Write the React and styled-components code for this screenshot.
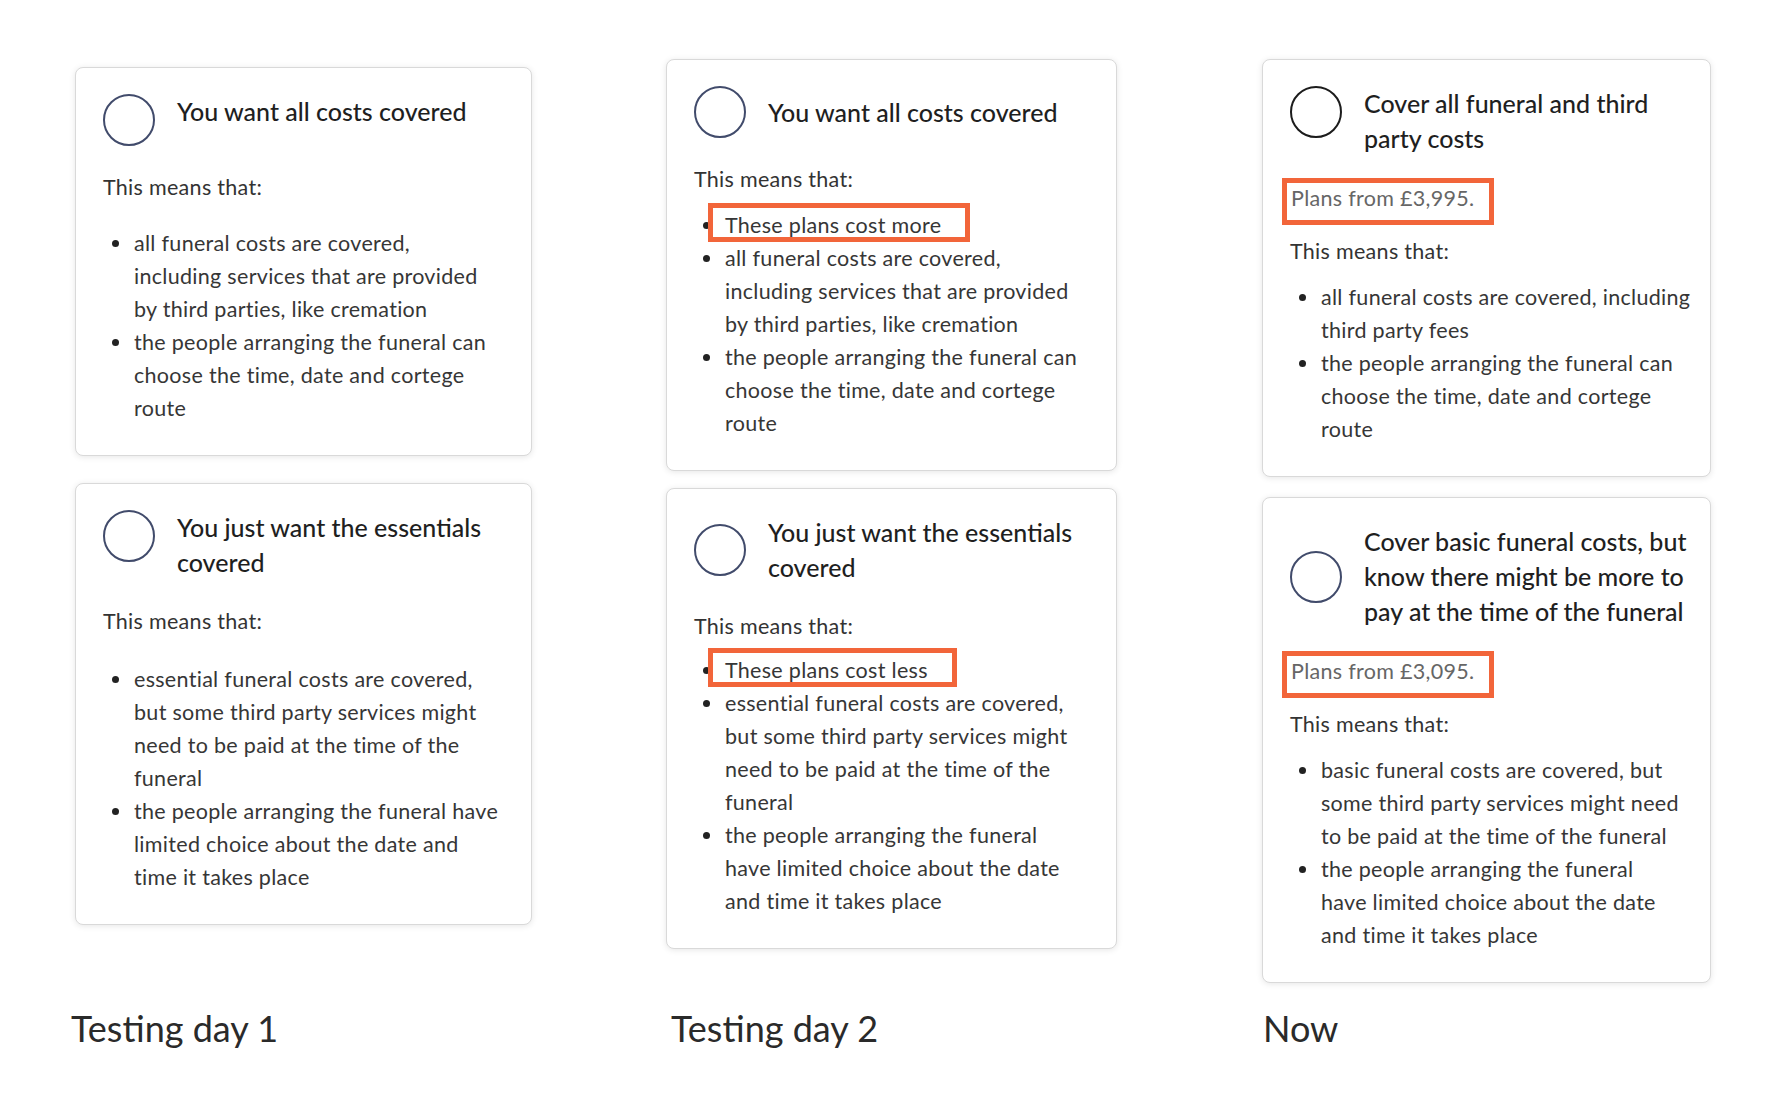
import React from "react";
import styled, { createGlobalStyle } from "styled-components";

const GlobalStyle = createGlobalStyle`
  html, body {
    margin: 0;
    padding: 0;
    background: #ffffff;
  }
  body {
    font-family: Lato, "Open Sans", "Liberation Sans", sans-serif;
    color: #3a3a3a;
  }
`;

const Board = styled.div`
  display: grid;
  grid-template-columns: 591px 596px 449px;
  grid-template-rows: auto auto;
  row-gap: 24px;
  padding: 59px 0 0 75px;
`;

const Column = styled.div`
  display: flex;
  flex-direction: column;
  align-items: flex-start;
  gap: ${(p) => p.$gap}px;
  padding-top: ${(p) => p.$top || 0}px;
`;

const Card = styled.div`
  box-sizing: border-box;
  width: ${(p) => p.$width}px;
  background: #ffffff;
  border: 1px solid #d9d9d9;
  border-radius: 8px;
  box-shadow: 0 1px 6px rgba(0, 0, 0, 0.1);
  padding: 26px 20px 30px 27px;
`;

const Header = styled.div`
  display: flex;
  align-items: ${(p) => (p.$align === "center" ? "center" : "flex-start")};
  gap: 22px;
  margin-bottom: 22px;
`;

const Radio = styled.span`
  flex: none;
  box-sizing: border-box;
  width: 52px;
  height: 52px;
  border-radius: 50%;
  border: 2.5px solid ${(p) => (p.$dark ? "#1c1c1c" : "#414b6b")};
`;

const Title = styled.div`
  font-size: 25px;
  line-height: 35px;
  font-weight: 500;
  color: #1f1f1f;
  white-space: pre;
`;

const Price = styled.div`
  display: inline-block;
  margin-left: -8px;
  padding: 0 15px 7px 4px;
  border: 5px solid #f2653a;
  font-size: 21.5px;
  letter-spacing: 0.3px;
  line-height: 30px;
  color: #666666;
`;

const Means = styled.p`
  margin: ${(p) => (p.$afterPrice ? 10 : 25)}px 0 0;
  font-size: 21.5px;
  letter-spacing: 0.3px;
  line-height: 33px;
  color: #333333;
`;

const Bullets = styled.ul`
  margin: ${(p) => p.$gap}px 0 0;
  padding: 0 0 0 30px;
  list-style: disc;
`;

const Item = styled.li`
  padding-left: 1px;
  font-size: 21.5px;
  letter-spacing: 0.3px;
  line-height: 33px;
  color: #363636;
  white-space: pre;

  &::marker {
    color: #222222;
  }
`;

const Marked = styled.span`
  position: relative;

  &::before {
    content: "";
    position: absolute;
    top: -9px;
    bottom: -4px;
    left: -17px;
    right: -29px;
    border: 5px solid #f2653a;
  }
`;

const Label = styled.div`
  margin-left: ${(p) => p.$nudge}px;
  font-size: 36px;
  line-height: 43px;
  font-weight: 400;
  color: #2a2a2a;
`;

const columns = [
  {
    top: 8,
    gap: 27,
    label: "Testing day 1",
    nudge: -4,
    cards: [
      {
        width: 457,
        align: "start",
        title: "You want all costs covered",
        listGap: 23,
        items: [
          "all funeral costs are covered,\nincluding services that are provided\nby third parties, like cremation",
          "the people arranging the funeral can\nchoose the time, date and cortege\nroute",
        ],
      },
      {
        width: 457,
        align: "start",
        title: "You just want the essentials\ncovered",
        listGap: 25,
        items: [
          "essential funeral costs are covered,\nbut some third party services might\nneed to be paid at the time of the\nfuneral",
          "the people arranging the funeral have\nlimited choice about the date and\ntime it takes place",
        ],
      },
    ],
  },
  {
    top: 0,
    gap: 17,
    label: "Testing day 2",
    nudge: 5,
    cards: [
      {
        width: 451,
        align: "center",
        title: "You want all costs covered",
        listGap: 13,
        marked: "These plans cost more",
        items: [
          "all funeral costs are covered,\nincluding services that are provided\nby third parties, like cremation",
          "the people arranging the funeral can\nchoose the time, date and cortege\nroute",
        ],
      },
      {
        width: 451,
        align: "center",
        title: "You just want the essentials\ncovered",
        listGap: 11,
        marked: "These plans cost less",
        items: [
          "essential funeral costs are covered,\nbut some third party services might\nneed to be paid at the time of the\nfuneral",
          "the people arranging the funeral\nhave limited choice about the date\nand time it takes place",
        ],
      },
    ],
  },
  {
    top: 0,
    gap: 20,
    label: "Now",
    nudge: 1,
    cards: [
      {
        width: 449,
        align: "start",
        dark: true,
        title: "Cover all funeral and third\nparty costs",
        price: "Plans from £3,995.",
        listGap: 13,
        items: [
          "all funeral costs are covered, including\nthird party fees",
          "the people arranging the funeral can\nchoose the time, date and cortege\nroute",
        ],
      },
      {
        width: 449,
        align: "center",
        title: "Cover basic funeral costs, but\nknow there might be more to\npay at the time of the funeral",
        price: "Plans from £3,095.",
        listGap: 13,
        items: [
          "basic funeral costs are covered, but\nsome third party services might need\nto be paid at the time of the funeral",
          "the people arranging the funeral\nhave limited choice about the date\nand time it takes place",
        ],
      },
    ],
  },
];

function OptionCard({ card }) {
  return (
    <Card $width={card.width}>
      <Header $align={card.align}>
        <Radio $dark={card.dark} />
        <Title>{card.title}</Title>
      </Header>
      {card.price && <Price>{card.price}</Price>}
      <Means $afterPrice={!!card.price}>This means that:</Means>
      <Bullets $gap={card.listGap}>
        {card.marked && (
          <Item>
            <Marked>{card.marked}</Marked>
          </Item>
        )}
        {card.items.map((text) => (
          <Item key={text}>{text}</Item>
        ))}
      </Bullets>
    </Card>
  );
}

export default function App() {
  return (
    <>
      <GlobalStyle />
      <Board>
        {columns.map((col) => (
          <Column key={col.label} $gap={col.gap} $top={col.top}>
            {col.cards.map((card) => (
              <OptionCard key={card.title} card={card} />
            ))}
          </Column>
        ))}
        {columns.map((col) => (
          <Label key={col.label} $nudge={col.nudge}>
            {col.label}
          </Label>
        ))}
      </Board>
    </>
  );
}
